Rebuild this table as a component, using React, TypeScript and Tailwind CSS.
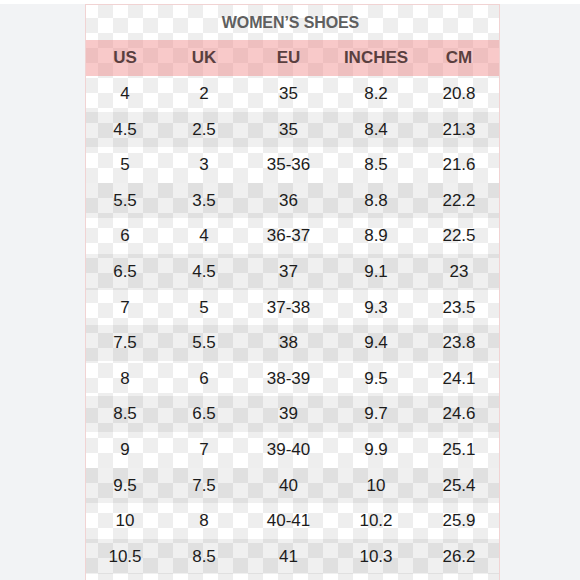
import React from "react";

const rows: [string, string, string, string, string][] = [
  ["4", "2", "35", "8.2", "20.8"],
  ["4.5", "2.5", "35", "8.4", "21.3"],
  ["5", "3", "35-36", "8.5", "21.6"],
  ["5.5", "3.5", "36", "8.8", "22.2"],
  ["6", "4", "36-37", "8.9", "22.5"],
  ["6.5", "4.5", "37", "9.1", "23"],
  ["7", "5", "37-38", "9.3", "23.5"],
  ["7.5", "5.5", "38", "9.4", "23.8"],
  ["8", "6", "38-39", "9.5", "24.1"],
  ["8.5", "6.5", "39", "9.7", "24.6"],
  ["9", "7", "39-40", "9.9", "25.1"],
  ["9.5", "7.5", "40", "10", "25.4"],
  ["10", "8", "40-41", "10.2", "25.9"],
  ["10.5", "8.5", "41", "10.3", "26.2"],
];

const headers = ["US", "UK", "EU", "INCHES", "CM"];
const grid = "grid grid-cols-[78px_80px_89px_86px_80px]";

export default function App() {
  return (
    <div
      className="w-[580px] h-[580px] overflow-hidden bg-[#f2f3f5] flex flex-col"
      style={{ fontFamily: '"Liberation Sans", Arial, sans-serif' }}
    >
      <div className="h-[4px] bg-white shrink-0" />
      <div className="flex justify-center pl-[5px] flex-1 min-h-0">
        <div className="w-[415px] border-x border-t border-[#f1d3d3] bg-[repeating-conic-gradient(#eeeeee_0_25%,#ffffff_0_50%)] bg-[length:30px_30px] bg-[position:-3px_-2px] flex flex-col">
          <div className="h-[35px] shrink-0 flex items-center justify-center text-[16px] font-bold text-[#5f5f5f] tracking-[-0.1px] pr-[4px]">
            WOMEN’S SHOES
          </div>
          <div className={`${grid} h-[36px] shrink-0 items-center bg-[rgba(238,120,120,0.4)]`}>
            {headers.map((h) => (
              <div key={h} className="text-center text-[17px] font-bold text-[#5a3f3f]">
                {h}
              </div>
            ))}
          </div>
          {rows.map((r, i) => (
            <div
              key={i}
              className={`${grid} h-[35.6px] shrink-0 items-center ${
                i % 2 === 1 ? "bg-[rgba(0,0,0,0.06)]" : ""
              }`}
            >
              {r.map((c, j) => (
                <div key={j} className="text-center text-[17px] text-[#1c1c1c]">
                  {c}
                </div>
              ))}
            </div>
          ))}
        </div>
      </div>
    </div>
  );
}
